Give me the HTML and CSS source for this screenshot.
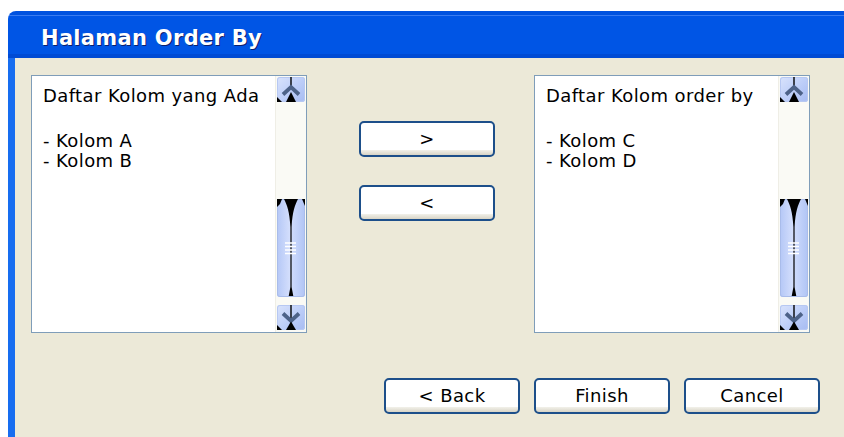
FILE: index.html
```html
<!DOCTYPE html>
<html lang="id">
<head>
<meta charset="utf-8">
<title>Halaman Order By</title>
<link rel="stylesheet" href="styles.css">
</head>
<body>
<div class="window">
  <div class="titlebar"><h1 class="title">Halaman Order By</h1></div>
  <div class="client">
    <div class="lists">
      <div class="listbox">
        <div class="list-text">
          <p class="list-heading">Daftar Kolom yang Ada</p>
          <ul class="items">
            <li>- Kolom A</li>
            <li>- Kolom B</li>
          </ul>
        </div>
        <div class="scrollbar">
          <div class="sb-btn">
            <svg viewBox="0 0 28 25" width="28" height="25"><path d="M14 0V10" stroke="#000" stroke-width="1.4"/><path d="M6 17.5L14 10L22 17.5" fill="none" stroke="#4d6288" stroke-width="3.8"/><path d="M9 25L14 15L19 25Z" fill="#000"/><path d="M0 20L5 25H0Z" fill="#000"/></svg>
          </div>
          <div class="sb-track"></div>
          <div class="sb-thumb">
            <svg viewBox="0 0 28 98" width="28" height="98"><path d="M0 0H5L3 5L0 8Z" fill="#000"/><path d="M7 0H21C18 6 15.5 12 14.6 28V88L16.3 97H11.7L13.4 88V28C12.5 12 10 6 7 0Z" fill="#000"/><path d="M25 0H28V7Z" fill="#000"/><g stroke="#fff" stroke-width="1.5"><path d="M8 44H19M8 47.5H19M8 51H19M8 54.5H19"/></g></svg>
          </div>
          <div class="sb-btn">
            <svg viewBox="0 0 28 25" width="28" height="25"><path d="M14 0V16" stroke="#000" stroke-width="1.4"/><path d="M6 8.5L14 16L22 8.5" fill="none" stroke="#4d6288" stroke-width="3.8"/><path d="M9 25L14 16.5L19 25Z" fill="#000"/><path d="M0 20L5 25H0Z" fill="#000"/></svg>
          </div>
        </div>
      </div>

      <div class="movers">
        <button class="btn">&gt;</button>
        <button class="btn">&lt;</button>
      </div>

      <div class="listbox">
        <div class="list-text">
          <p class="list-heading">Daftar Kolom order by</p>
          <ul class="items">
            <li>- Kolom C</li>
            <li>- Kolom D</li>
          </ul>
        </div>
        <div class="scrollbar">
          <div class="sb-btn">
            <svg viewBox="0 0 28 25" width="28" height="25"><path d="M14 0V10" stroke="#000" stroke-width="1.4"/><path d="M6 17.5L14 10L22 17.5" fill="none" stroke="#4d6288" stroke-width="3.8"/><path d="M9 25L14 15L19 25Z" fill="#000"/><path d="M0 20L5 25H0Z" fill="#000"/></svg>
          </div>
          <div class="sb-track"></div>
          <div class="sb-thumb">
            <svg viewBox="0 0 28 98" width="28" height="98"><path d="M0 0H5L3 5L0 8Z" fill="#000"/><path d="M7 0H21C18 6 15.5 12 14.6 28V88L16.3 97H11.7L13.4 88V28C12.5 12 10 6 7 0Z" fill="#000"/><path d="M25 0H28V7Z" fill="#000"/><g stroke="#fff" stroke-width="1.5"><path d="M8 44H19M8 47.5H19M8 51H19M8 54.5H19"/></g></svg>
          </div>
          <div class="sb-btn">
            <svg viewBox="0 0 28 25" width="28" height="25"><path d="M14 0V16" stroke="#000" stroke-width="1.4"/><path d="M6 8.5L14 16L22 8.5" fill="none" stroke="#4d6288" stroke-width="3.8"/><path d="M9 25L14 16.5L19 25Z" fill="#000"/><path d="M0 20L5 25H0Z" fill="#000"/></svg>
          </div>
        </div>
      </div>
    </div>

    <div class="actions">
      <button class="btn">&lt; Back</button>
      <button class="btn">Finish</button>
      <button class="btn">Cancel</button>
    </div>
  </div>
</div>
</body>
</html>
```

FILE: styles.css
```css
html, body {
  margin: 0;
  padding: 0;
  background: #ffffff;
  overflow: hidden;
}

body {
  width: 844px;
  height: 437px;
  font-family: "DejaVu Sans", Verdana, sans-serif;
  color: #000;
}

.window {
  margin: 11px 0 0 8px;
  height: 426px;
  display: flex;
  flex-direction: column;
  border-top-left-radius: 8px;
  overflow: hidden;
}

/* blue caption bar */
.titlebar {
  height: 47px;
  flex: none;
  background: linear-gradient(to bottom,
    #0052df 0, #0052df 4px,
    #3a7cf0 4px, #3a7cf0 5px,
    #0055e5 5px, #0055e5 43px,
    #004bd4 43px, #004bd4 47px);
}

.title {
  margin: 0;
  padding: 8px 0 0 33px;
  font-size: 21px;
  line-height: 39px;
  font-weight: bold;
  color: #ffffff;
  text-shadow: 1px 1px 0 #0b1f6e;
  letter-spacing: 0.3px;
}

/* window body */
.client {
  flex: 1;
  background: #ece9d8;
  border-left: 7px solid #176df0;
  padding: 17px 0 0 16px;
}

.lists {
  display: flex;
  height: 258px;
}

.listbox {
  width: 276px;
  height: 258px;
  box-sizing: border-box;
  border: 1px solid #7f9db9;
  background: #ffffff;
  display: flex;
}

.list-text {
  flex: 1;
  padding: 10px 0 0 11px;
  font-size: 18px;
  letter-spacing: 0.4px;
  line-height: 20px;
}

.list-heading {
  margin: 0 0 25px 0;
  white-space: nowrap;
}

.items {
  list-style: none;
  margin: 0;
  padding: 0;
}

/* XP style vertical scrollbar */
.scrollbar {
  width: 31px;
  flex: none;
  box-sizing: border-box;
  background: #fafaf5;
  border-left: 1px solid #efeee6;
  display: flex;
  flex-direction: column;
  padding: 1px 1px 2px 1px;
}

.sb-btn {
  height: 25px;
  flex: none;
  border-radius: 3px;
  box-shadow: inset 0 0 0 1px #b7c8f2;
  background: linear-gradient(135deg, #d9e3fc 0%, #bccdf8 55%, #a6bbf2 100%);
}

.sb-btn svg, .sb-thumb svg {
  display: block;
}

.sb-track {
  flex: 1;
}

.sb-thumb {
  height: 98px;
  flex: none;
  margin-bottom: 8px;
  border-radius: 3px;
  box-shadow: inset 0 0 0 1px #a9bcea;
  background: linear-gradient(to right, #b4c7f6 0%, #d3defc 45%, #c9d7fb 60%, #b0c4f5 100%);
}

/* move buttons between the lists */
.movers {
  width: 227px;
  flex: none;
  display: flex;
  flex-direction: column;
  gap: 28px;
  padding: 46px 0 0 52px;
  box-sizing: border-box;
}

.btn {
  width: 136px;
  height: 36px;
  box-sizing: border-box;
  border: 2px solid #1d4f8a;
  border-radius: 5px;
  background: linear-gradient(to bottom, #ffffff 0, #ffffff calc(100% - 5px), #f2f1ea calc(100% - 5px), #d8d4c6 100%);
  font-family: "DejaVu Sans", Verdana, sans-serif;
  font-size: 18px;
  letter-spacing: 0.4px;
  color: #000;
  padding: 0;
  line-height: 30px;
}

.actions {
  display: flex;
  gap: 14px;
  margin-top: 45px;
  padding-left: 353px;
}
```
